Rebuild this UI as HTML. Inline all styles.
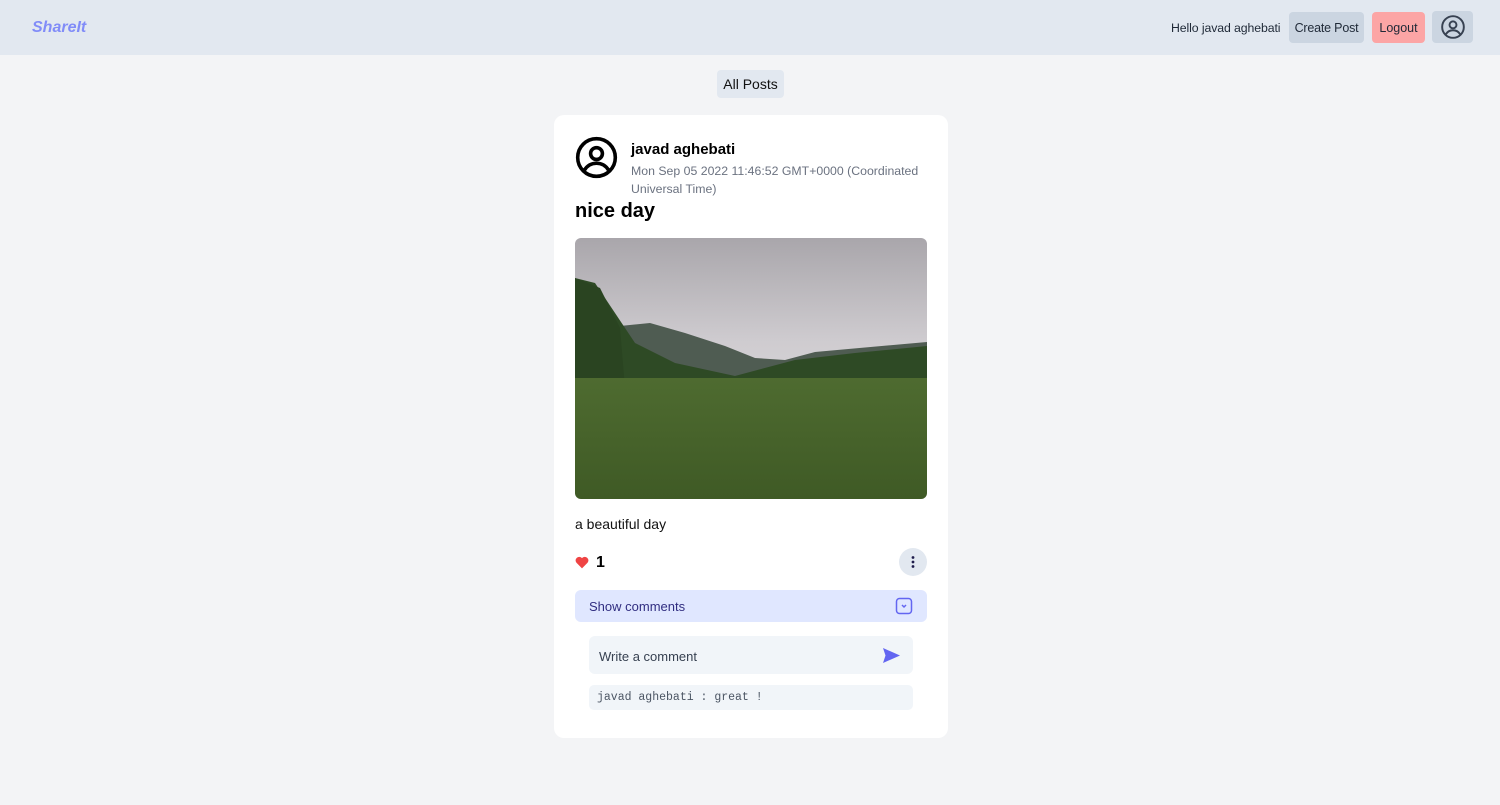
<!DOCTYPE html>
<html><head><meta charset="utf-8"><style>
*{box-sizing:border-box;margin:0;padding:0}
body{width:1500px;height:805px;background:#f3f4f6;font-family:"Liberation Sans","DejaVu Sans",sans-serif;position:relative;overflow:hidden}
.nav{position:absolute;left:0;top:0;width:1500px;height:55px;background:#e2e8f0}
.logo{position:absolute;left:32px;top:19px;font-weight:bold;font-style:italic;color:#818cf8;font-size:16px}
.hello{position:absolute;left:1171px;top:21px;font-size:12.3px;color:#1f2937;letter-spacing:-0.1px}
.btn{position:absolute;top:12px;height:31px;border-radius:4px;font-size:12.5px;color:#1f2937;display:flex;align-items:center;justify-content:center}
.card{position:absolute;left:554px;top:115px;width:394px;height:623px;background:#fff;border-radius:10px}
</style></head><body>
<div class="nav">
<div class="logo">ShareIt</div>
<div class="hello">Hello javad aghebati</div>
<div class="btn" style="left:1289px;width:75px;background:#cbd5e1;letter-spacing:-0.2px">Create Post</div>
<div class="btn" style="left:1372px;width:53px;background:#fca5a5">Logout</div>
<div class="btn" style="left:1432px;width:41px;height:32px;top:11px;background:#cbd5e1">
<svg width="26" height="26" viewBox="0 0 24 24" fill="none" stroke="#374151" stroke-width="1.8"><circle cx="12" cy="12" r="10"/><circle cx="12" cy="10" r="3.2"/><path d="M5.5 18.5c1.5-2.3 3.8-3.5 6.5-3.5s5 1.2 6.5 3.5"/></svg></div>
</div>
<div style="position:absolute;left:717px;top:70px;width:67px;height:28px;background:#e2e8f0;border-radius:4px;font-size:14px;color:#111;display:flex;align-items:center;justify-content:center">All Posts</div>
<div class="card">
<svg style="position:absolute;left:21px;top:21px" width="43" height="43" viewBox="0 0 24 24" fill="none" stroke="#000" stroke-width="2"><circle cx="12" cy="12" r="10.5"/><circle cx="12" cy="9.8" r="3.3"/><path d="M5.3 19c1.6-2.6 4-3.8 6.7-3.8s5.1 1.2 6.7 3.8"/></svg>
<div style="position:absolute;left:77px;top:26px;font-weight:bold;font-size:15px;color:#000">javad aghebati</div>
<div style="position:absolute;left:77px;top:47px;width:300px;font-size:12.3px;line-height:18px;color:#6b7280">Mon Sep 05 2022 11:46:52 GMT+0000 (Coordinated Universal Time)</div>
<div style="position:absolute;left:21px;top:85px;font-weight:bold;font-size:20px;color:#000">nice day</div>
<svg style="position:absolute;left:21px;top:123px;border-radius:6px" width="352" height="261" viewBox="0 0 352 261">
<defs><linearGradient id="s" x1="0" y1="0" x2="0" y2="1"><stop offset="0" stop-color="#a9a6ab"/><stop offset="0.4" stop-color="#cfccd0"/><stop offset="1" stop-color="#e2e0e2"/></linearGradient>
<linearGradient id="g" x1="0" y1="0" x2="0" y2="1"><stop offset="0" stop-color="#4e6b30"/><stop offset="1" stop-color="#3f5a25"/></linearGradient></defs>
<rect width="352" height="261" fill="url(#s)"/>
<path d="M45 88 L75 85 L110 95 L150 108 L180 120 L210 122 L240 114 L352 104 L352 150 L0 150 Z" fill="#4f5c52"/>
<path d="M0 40 L20 45 L40 75 L60 105 L100 125 L160 138 L220 122 L280 115 L352 108 L352 145 L0 160 Z" fill="#2e4a25"/>
<path d="M0 40 L25 50 L45 90 L50 150 L0 160 Z" fill="#2a4421"/>
<rect y="140" width="352" height="121" fill="url(#g)"/>
</svg>
<div style="position:absolute;left:21px;top:401px;font-size:14px;color:#111">a beautiful day</div>
<svg style="position:absolute;left:21px;top:441px" width="14" height="13" viewBox="0 0 24 22"><path d="M12 21 L2.5 11.5 A5.5 5.5 0 0 1 12 3.5 A5.5 5.5 0 0 1 21.5 11.5 Z" fill="#ef4444"/></svg>
<div style="position:absolute;left:42px;top:439px;font-weight:bold;font-size:16px;color:#000">1</div>
<div style="position:absolute;left:345px;top:433px;width:28px;height:28px;border-radius:50%;background:#e2e8f0"><svg width="28" height="28" viewBox="0 0 28 28" fill="#1e1b4b"><circle cx="14" cy="9.5" r="1.4"/><circle cx="14" cy="14" r="1.4"/><circle cx="14" cy="18.5" r="1.4"/></svg></div>
<div style="position:absolute;left:21px;top:475px;width:352px;height:32px;background:#e0e7ff;border-radius:6px">
<div style="position:absolute;left:14px;top:9px;font-size:13px;color:#312e81">Show comments</div>
<svg style="position:absolute;left:320px;top:7px" width="18" height="18" viewBox="0 0 18 18" fill="none" stroke="#6366f1" stroke-width="1.5"><rect x="1.5" y="1.5" width="15" height="15" rx="3"/><path d="M7 8l2 2 2-2"/></svg></div>
<div style="position:absolute;left:35px;top:521px;width:324px;height:38px;background:#f1f5f9;border-radius:6px">
<div style="position:absolute;left:10px;top:13px;font-size:13px;color:#374151">Write a comment</div>
<svg style="position:absolute;left:293px;top:11px" width="19" height="17" viewBox="0 0 19 17"><path d="M1 1 L18 8.5 L1 16 L3.5 8.5 Z" fill="#6366f1"/></svg></div>
<div style="position:absolute;left:35px;top:570px;width:324px;height:25px;background:#f1f5f9;border-radius:5px;font-family:'Liberation Mono',monospace;font-size:11.5px;color:#4b5563;padding:6px 0 0 8px">javad aghebati : great !</div>
</div>
</body></html>
